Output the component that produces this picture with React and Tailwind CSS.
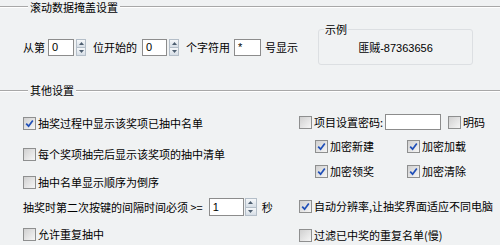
import React from "react";

const Check = ({ checked }) => (
  <span className="w-[13px] h-[13px] shrink-0 border border-[#8e8f8f] bg-linear-to-br from-[#d0d0d0] to-[#f6f6f6] flex items-center justify-center">
    {checked && (
      <svg width="9" height="9" viewBox="0 0 9 9">
        <path d="M1.2 4.6 L3.6 7.2 L7.8 1.4" stroke="#1f4fb8" strokeWidth="1.7" fill="none" />
      </svg>
    )}
  </span>
);

const Spin = ({ h = "h-[17px]", w = "w-[10px]" }) => (
  <div className={`flex flex-col ${w} ${h} shrink-0`}>
    <div className="flex-1 border border-[#b4bec8] bg-linear-to-b from-[#f6f8fa] to-[#d6dee6] flex items-center justify-center">
      <svg width="5" height="3" viewBox="0 0 5 3">
        <path d="M0 3 L2.5 0 L5 3Z" fill="#4d5e70" />
      </svg>
    </div>
    <div className="flex-1 border border-t-0 border-[#b4bec8] bg-linear-to-b from-[#f6f8fa] to-[#d6dee6] flex items-center justify-center">
      <svg width="5" height="3" viewBox="0 0 5 3">
        <path d="M0 0 L5 0 L2.5 3Z" fill="#4d5e70" />
      </svg>
    </div>
  </div>
);

const Input = ({ className, value }) => (
  <div
    className={`bg-white border border-[#8c8c8c] flex items-center pl-[3px] text-[11px] text-black shrink-0 ${className}`}
    style={{ fontFamily: '"Liberation Sans", Arial, sans-serif' }}
  >
    {value}
  </div>
);

const Header = ({ title, className }) => (
  <div className={`flex items-center h-[13px] ${className}`}>
    <div className="w-[28px] border-t border-t-[#a8a8a8] border-b border-b-white" />
    <span className="px-[2px] leading-[13px]">{title}</span>
    <div className="flex-1 border-t border-t-[#a8a8a8] border-b border-b-white" />
  </div>
);

const CB = ({ checked, label, className = "" }) => (
  <div className={`flex items-center h-[20px] ${className}`}>
    <Check checked={checked} />
    <span className="ml-[2px] whitespace-nowrap">{label}</span>
  </div>
);

export default function App() {
  return (
    <div
      className="w-[500px] h-[245px] bg-[#f0f2f3] overflow-hidden text-[11px] text-black leading-none"
      style={{ fontFamily: '"Noto Sans CJK SC", "Noto Sans", sans-serif' }}
    >
      <Header title="滚动数据掩盖设置" className="pt-[1px]" />

      <div className="flex items-center h-[36px] mt-[16px] pl-[23px]">
        <span>从第</span>
        <Input className="ml-[3px] w-[26px] h-[17px]" value="0" />
        <div className="ml-[2px]"><Spin /></div>
        <span className="ml-[7px]">位开始的</span>
        <Input className="ml-[5px] w-[25px] h-[17px]" value="0" />
        <div className="ml-[2px]"><Spin /></div>
        <span className="ml-[7px]">个字符用</span>
        <Input className="ml-[4px] w-[27px] h-[17px]" value="*" />
        <span className="ml-[4px]">号显示</span>
        <div className="relative ml-[20px] w-[155px] h-[36px] border border-[#dcdfe2] rounded-[3px] flex items-center justify-center">
          <span className="absolute left-[5px] -top-[6px] bg-[#f0f2f3] px-[1px] leading-[11px]">示例</span>
          <span className="mt-[1px]">
            匪贼<span style={{ fontFamily: '"Liberation Sans", Arial, sans-serif' }}>-87363656</span>
          </span>
        </div>
      </div>

      <Header title="其他设置" className="mt-[19px]" />

      <div className="flex">
        <div className="w-[299px] pl-[23px] flex flex-col">
          <CB checked label="抽奖过程中显示该奖项已抽中名单" className="mt-[16px]" />
          <CB label="每个奖项抽完后显示该奖项的抽中清单" className="mt-[11px]" />
          <CB label="抽中名单显示顺序为倒序" className="mt-[8px]" />
          <div className="flex items-center h-[20px] mt-[5px]">
            <span>抽奖时第二次按键的间隔时间必须 &gt;=</span>
            <Input className="ml-[6px] w-[35px] h-[18px]" value="1" />
            <div className="ml-[1px]"><Spin h="h-[18px]" w="w-[12px]" /></div>
            <span className="ml-[5px]">秒</span>
          </div>
          <CB label="允许重复抽中" className="mt-[7px]" />
        </div>

        <div className="flex-1 flex flex-col">
          <div className="flex items-center h-[20px] mt-[15px]">
            <Check />
            <span className="ml-[2px]">项目设置密码:</span>
            <Input className="ml-[2px] w-[56px] h-[16px]" value="" />
            <div className="ml-[7px] flex items-center">
              <Check />
              <span className="ml-[2px]">明码</span>
            </div>
          </div>
          <div className="flex pl-[16px] mt-[4px]">
            <CB checked label="加密新建" className="w-[92px]" />
            <CB checked label="加密加载" />
          </div>
          <div className="flex pl-[16px] mt-[5px]">
            <CB checked label="加密领奖" className="w-[92px]" />
            <CB checked label="加密清除" />
          </div>
          <CB checked label="自动分辨率,让抽奖界面适应不同电脑" className="mt-[15px]" />
          <CB label="过滤已中奖的重复名单(慢)" className="mt-[9px]" />
        </div>
      </div>
    </div>
  );
}
